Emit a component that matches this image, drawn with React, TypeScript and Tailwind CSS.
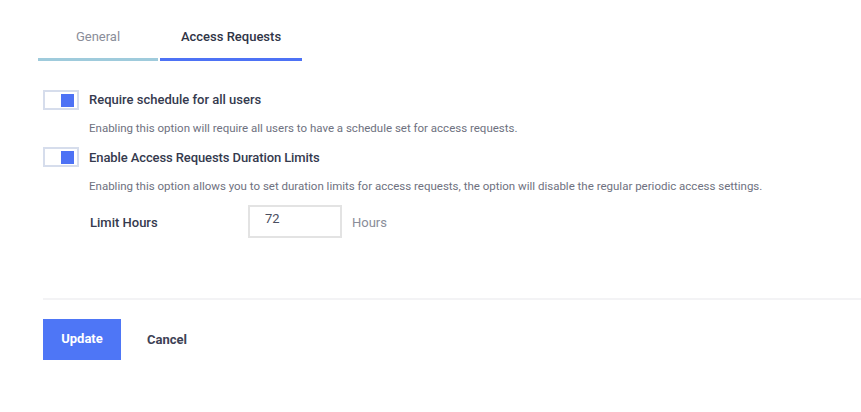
export default function App() {
  const font = { fontFamily: 'Roboto, "Liberation Sans", sans-serif' };
  const Toggle = () => (
    <div className="w-[36px] h-[20px] border-2 border-[#d6ddec] bg-white flex items-center justify-end pr-[3px] shrink-0">
      <div className="w-[13px] h-[13px] bg-[#4d72f5]" />
    </div>
  );
  return (
    <div className="w-[861px] h-[412px] bg-white relative overflow-hidden" style={font}>
      <div className="flex pl-[38px] pt-[27px]">
        <div className="w-[120px] h-[34px] flex items-start justify-center border-b-[3px] border-[#9fcbdc] text-[13px] text-[#8a8d99]">
          General
        </div>
        <div className="w-[142px] ml-[2px] h-[34px] flex items-start justify-center border-b-[3px] border-[#4d72f5] text-[13px] font-medium text-[#2f3446]">
          Access Requests
        </div>
      </div>
      <div className="pl-[43px] pt-[29px]">
        <div className="flex items-center gap-[10px]">
          <Toggle />
          <div className="text-[13px] font-medium text-[#353a4e]">Require schedule for all users</div>
        </div>
        <div className="pl-[46px] mt-[10px] text-[11.5px] text-[#6e7180]">
          Enabling this option will require all users to have a schedule set for access requests.
        </div>
        <div className="flex items-center gap-[10px] mt-[10px]">
          <Toggle />
          <div className="text-[13px] font-medium text-[#353a4e] tracking-[-0.1px]">Enable Access Requests Duration Limits</div>
        </div>
        <div className="pl-[46px] mt-[11px] text-[11.5px] text-[#6e7180]">
          Enabling this option allows you to set duration limits for access requests, the option will disable the regular periodic access settings.
        </div>
        <div className="flex items-center pl-[47px] mt-[9px]">
          <div className="w-[158px] text-[13px] font-medium text-[#353a4e] pt-[4px]">Limit Hours</div>
          <div className="w-[94px] h-[33px] border-2 border-[#e3e3e3] pl-[15px] pb-[4px] flex items-center text-[13px] text-[#4a4e60]">
            72
          </div>
          <div className="ml-[10px] text-[13px] text-[#8a8d99] pt-[4px]">Hours</div>
        </div>
      </div>
      <div className="ml-[43px] mt-[60px] h-[2px] bg-[#f3f3f5]" />
      <div className="flex items-center pl-[43px] mt-[19px]">
        <button className="w-[78px] h-[41px] bg-[#4e76f6] text-white text-[13px] font-bold flex items-center justify-center">
          Update
        </button>
        <button className="ml-[26px] text-[13px] font-bold text-[#3d4255] pt-[2px]">Cancel</button>
      </div>
    </div>
  );
}
